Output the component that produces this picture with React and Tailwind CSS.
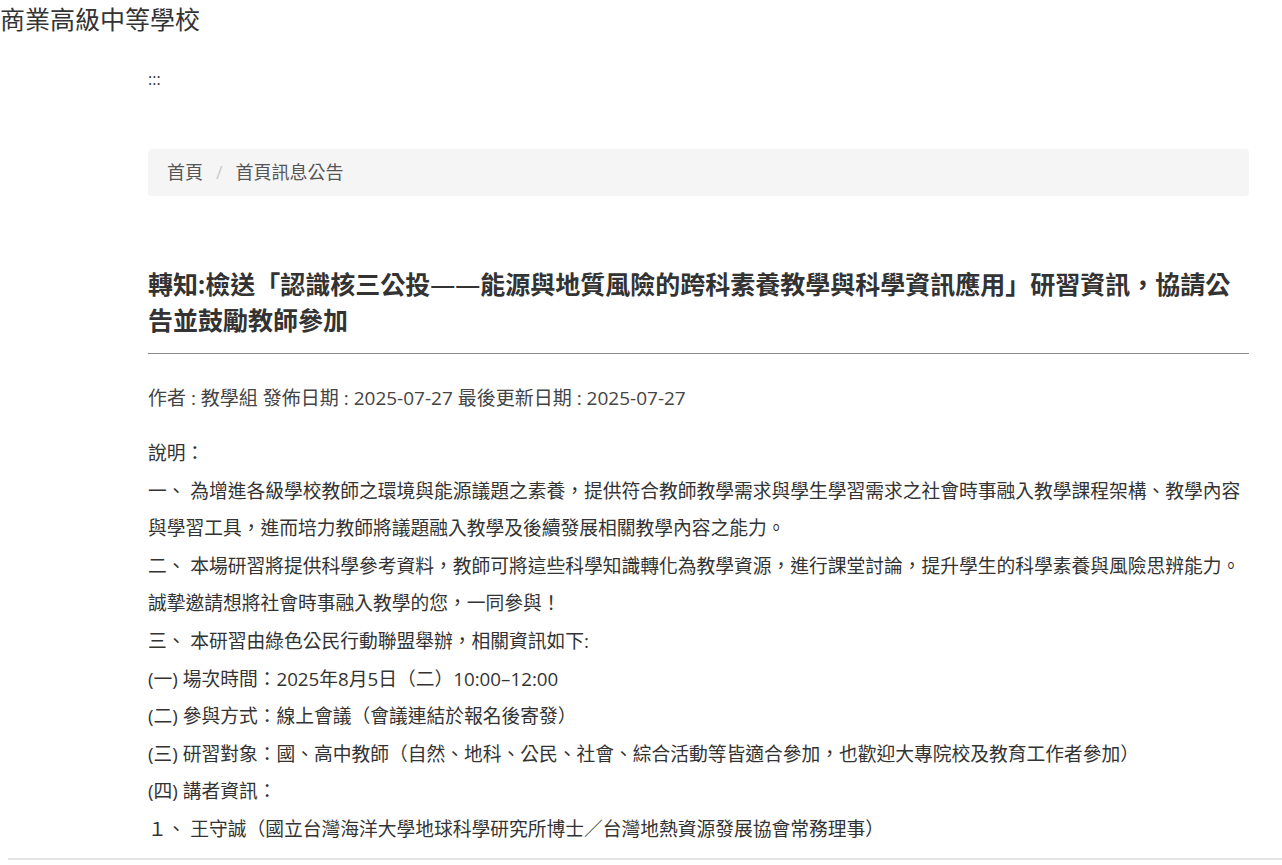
export default function App() {
  const lines = [
    "說明：",
    "一、 為增進各級學校教師之環境與能源議題之素養，提供符合教師教學需求與學生學習需求之社會時事融入教學課程架構、教學內容",
    "與學習工具，進而培力教師將議題融入教學及後續發展相關教學內容之能力。",
    "二、 本場研習將提供科學參考資料，教師可將這些科學知識轉化為教學資源，進行課堂討論，提升學生的科學素養與風險思辨能力。",
    "誠摯邀請想將社會時事融入教學的您，一同參與！",
    "三、 本研習由綠色公民行動聯盟舉辦，相關資訊如下:",
    "(一) 場次時間：2025年8月5日（二）10:00–12:00",
    "(二) 參與方式：線上會議（會議連結於報名後寄發）",
    "(三) 研習對象：國、高中教師（自然、地科、公民、社會、綜合活動等皆適合參加，也歡迎大專院校及教育工作者參加）",
    "(四) 講者資訊：",
    "１、 王守誠（國立台灣海洋大學地球科學研究所博士／台灣地熱資源發展協會常務理事）",
  ];
  return (
    <div className="min-h-[865px] bg-white text-[#333] font-['Open_Sans','Noto_Sans_CJK_TC',sans-serif]">
      <h1 className="text-[25px] leading-[38px] font-normal text-[#333] whitespace-nowrap">商業高級中等學校</h1>
      <div className="ml-[148px] w-[1101px]">
        <div className="mt-[31px] text-[16px] leading-[20px] text-[#333]">:::</div>
        <nav className="mt-[60px] h-[47px] rounded-[4px] bg-[#f5f5f5] px-[19px] flex items-center gap-[13px] text-[18px] text-[#555]">
          <span>首頁</span>
          <span className="text-[#ccc]">/</span>
          <span>首頁訊息公告</span>
        </nav>
        <h2 className="mt-[70px] text-[25px] leading-[36px] font-bold text-[#333]">
          <div className="whitespace-nowrap">
            轉知:檢送「認識核三公投<span className="font-['Noto_Sans','Noto_Sans_CJK_TC',sans-serif] font-normal">——</span>能源與地質風險的跨科素養教學與科學資訊應用」研習資訊，協請公
          </div>
          <div className="whitespace-nowrap">告並鼓勵教師參加</div>
        </h2>
        <div className="mt-[15px] h-px bg-[#8a8a8a]" />
        <div className="mt-[25px] text-[19px] leading-[38px] text-[#444] whitespace-nowrap">
          作者 : 教學組 發佈日期 : 2025-07-27 最後更新日期 : 2025-07-27
        </div>
        <div className="mt-[17px] text-[18.75px] leading-[37.6px] text-[#333]">
          {lines.map((l, i) => (
            <div key={i} className="whitespace-nowrap">{l}</div>
          ))}
        </div>
      </div>
      <div className="mt-[10px] ml-[8px] h-[2px] bg-[#e3e3e3]" />
    </div>
  );
}
